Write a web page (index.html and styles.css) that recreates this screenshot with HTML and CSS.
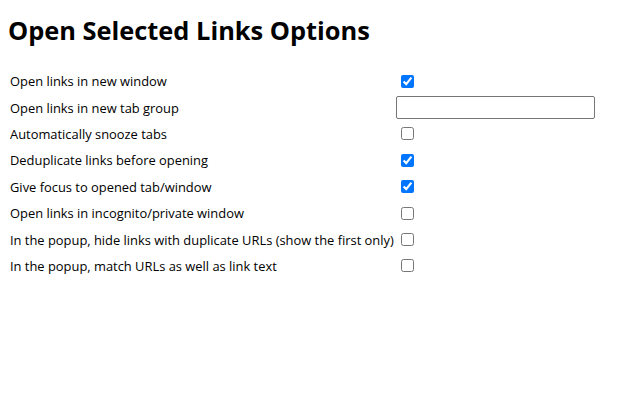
FILE: index.html
```html
<!DOCTYPE html>
<html>
<head>
<meta charset="utf-8">
<title>Open Selected Links Options</title>
<link rel="stylesheet" href="styles.css">
</head>
<body>
<h1 class="title">Open Selected Links Options</h1>
<div class="options">
  <label class="label" for="o1">Open links in new window</label>
  <div class="control"><input class="check" type="checkbox" id="o1" checked></div>
  <label class="label" for="o2">Open links in new tab group</label>
  <div class="control"><input class="text" type="text" id="o2"></div>
  <label class="label" for="o3">Automatically snooze tabs</label>
  <div class="control"><input class="check" type="checkbox" id="o3"></div>
  <label class="label" for="o4">Deduplicate links before opening</label>
  <div class="control"><input class="check" type="checkbox" id="o4" checked></div>
  <label class="label" for="o5">Give focus to opened tab/window</label>
  <div class="control"><input class="check" type="checkbox" id="o5" checked></div>
  <label class="label" for="o6">Open links in incognito/private window</label>
  <div class="control"><input class="check" type="checkbox" id="o6"></div>
  <label class="label" for="o7">In the popup, hide links with duplicate URLs (show the first only)</label>
  <div class="control"><input class="check" type="checkbox" id="o7"></div>
  <label class="label" for="o8">In the popup, match URLs as well as link text</label>
  <div class="control"><input class="check" type="checkbox" id="o8"></div>
</div>
</body>
</html>
```
FILE: styles.css
```css
html, body {
  margin: 0;
  background: #ffffff;
}
body {
  padding: 8px;
  font-family: "Open Sans", "Noto Sans", sans-serif;
  color: #000000;
}
.title {
  margin: 6px 0 0 0;
  font-size: 25.4px;
  line-height: 32px;
  font-weight: 700;
}
.options {
  display: grid;
  grid-template-columns: 386px auto;
  grid-auto-rows: 26.4px;
  align-items: center;
  padding-left: 2px;
  margin-top: 22px;
}
.label {
  font-size: 12.9px;
  line-height: 16px;
}
.control {
  display: flex;
  align-items: center;
}
.check {
  width: 13px;
  height: 13px;
  margin: 0 0 0 5px;
}
.text {
  box-sizing: border-box;
  width: 199px;
  height: 23px;
  margin: 0;
  border: 1px solid #767676;
  border-radius: 2px;
  padding: 1px 2px;
}
```
